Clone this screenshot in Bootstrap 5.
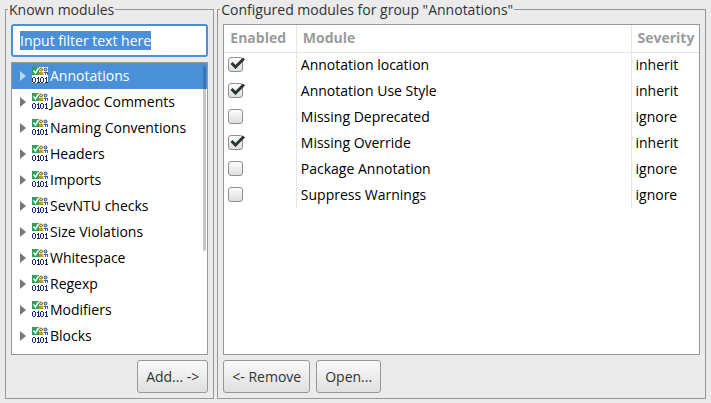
<!DOCTYPE html>
<html lang="en">
<head>
<meta charset="utf-8">
<meta name="viewport" content="width=device-width, initial-scale=1">
<title>Checkstyle configuration</title>
<link rel="stylesheet" href="https://cdn.jsdelivr.net/npm/bootstrap@5.3.0/dist/css/bootstrap.min.css">
<style>
body{background:#ebebeb;color:#000;font:14px/20px "Open Sans","Noto Sans",sans-serif}
.dialog-area{display:grid;grid-template-columns:minmax(0,209fr) minmax(0,488fr);padding:0 5px 4px;gap:3px}
.edge{width:1px;background:linear-gradient(#8c8c8c 45px,#6b2a86 45px 48px,#8c8c8c 48px 70px,#10102e 70px 76px,#8c8c8c 76px 89px,#222 89px 98px,#8c8c8c 98px 111px,#1d4f86 111px 122px,#8c8c8c 122px 133px,#151530 133px 139px,#8c8c8c 139px 152px,#6a20a0 152px 158px,#8c8c8c 158px 176px,#3a9cc0 176px 179px,#8c8c8c 179px 195px,#333 195px 203px,#8c8c8c 203px 216px,#226a80 216px 223px,#8c8c8c 223px 237px,#bf6a26 237px 245px,#8c8c8c 245px)}
.pane{border:1px solid #979797;padding:5px;gap:5px}
.pane legend{font-size:14px;line-height:19px;padding:0 1px;margin:0 0 0 -3px;color:#2e3436}
.filter{height:33px;border:2px solid #4a90d9;border-radius:3px;padding:0 7px;font-size:14px;color:#2e3436;background:#fff}
.filter:focus{box-shadow:none;border-color:#4a90d9;background:#fff}
.filter::selection{background:#4a90d9;color:#fff}
.sunken{border:1px solid #979797;background:#fff;min-height:0}
.tree-row{height:26px;padding-left:8px;color:#000}
.tree-row.current{background:#4a90d9;color:#fff}
.twist{width:6px;height:10px;fill:#777;margin-right:6px}
.current .twist{fill:#b9d7f5}
.mod-icon{width:16px;height:16px;margin:0 2px 2px 0}
.thumb{right:1px;top:2px;width:3px;height:186px;border-radius:2px;background:#c6c6c6}
.current-part{height:24px;background:#3a76b5;border-radius:2px 2px 0 0}
.mods{table-layout:fixed}
.mods th{height:27px;padding:0 0 0 6px;color:#999c9c;border-bottom:1px solid #e6e6e6}
.mods td{height:26px;padding:0 0 0 4px}
.mods th+th,.mods td+td{border-left:1px solid #e6e6e6}
.c-on{width:72px}
.c-sev{width:68px}
.tick{appearance:none;display:block;width:15px;height:15px;margin:0;border:1px solid #8f8f8f;border-radius:3px;background:linear-gradient(#fdfdfd,#dedede)}
.tick-wrap{width:17px;height:16px}
.tick-mark{left:2px;top:0;width:15px;height:12px;fill:none;stroke:#2e3436;stroke-width:3;pointer-events:none;display:none}
.tick:checked+.tick-mark{display:block}
.act{height:33px;border:1px solid #979797;border-radius:3px;background:linear-gradient(#fafafa,#dfdfdf);color:#2e3436;font-size:14px;line-height:20px;padding:0 8px}
.act-row{gap:6px}
</style>
<script src="https://cdn.jsdelivr.net/npm/bootstrap@5.3.0/dist/js/bootstrap.bundle.min.js"></script>
</head>
<body>
<svg class="d-none" aria-hidden="true">
<symbol id="mod" viewBox="0 0 16 16">
<path fill="#fff" d="M0 0h16v16H0z"/>
<path fill="#2fa05c" d="M0 0h7v8H0z"/><path fill="none" stroke="#fff" stroke-width="1.5" d="M1.500 3.500l2 2.500L6.500 1"/>
<circle cx="9" cy="2.500" r="1.500" fill="#e8d25a" stroke="#7a6a22"/><path fill="#b59c2a" d="M7 5h3l2 3H7z"/>
<circle cx="13.500" cy="2.500" r="1.500" fill="#a9c4ea" stroke="#294a86"/><path fill="#3c63a5" d="M11 5h5v3h-1V6h-1v2h-1V6h-2z"/><path fill="#d9b93a" d="M10 5h2v1h-2z"/>
<g fill="#1d2a66" shape-rendering="crispEdges">
<path id="z" d="M1 10h2v1H1zM0 11h1v4H0zM3 11h1v4H3zM1 15h2v1H1z"/><path id="n" d="M6 10h1v5h1v1H5v-1h1v-3H5v-1h1z"/>
<use href="#z" x="8"/><use href="#n" x="8"/></g>
</symbol>
<symbol id="tw" viewBox="0 0 6 10"><path d="M0 0l6 5-6 5z"/></symbol>
<symbol id="ck" viewBox="0 0 15 12"><path d="M1.500 6l4 4L14 1.500"/></symbol>
</svg>
<div class="d-flex vh-100 overflow-hidden">
<main class="dialog-area flex-grow-1">
<fieldset class="pane d-flex flex-column">
<legend class="float-none w-auto">Known modules</legend>
<input class="form-control filter flex-shrink-0" id="filter" type="text" aria-label="Filter" value="Input filter text here" autofocus>
<div class="sunken position-relative flex-grow-1 overflow-hidden">
<ul class="list-unstyled m-0" id="tree"></ul>
<div class="thumb position-absolute"><div class="current-part"></div></div>
</div>
<div class="d-flex justify-content-end"><button type="button" class="btn act">Add... -&gt;</button></div>
</fieldset>
<fieldset class="pane d-flex flex-column">
<legend class="float-none w-auto">Configured modules for group "Annotations"</legend>
<div class="sunken flex-grow-1 overflow-hidden">
<table class="mods w-100">
<colgroup><col class="c-on"><col><col class="c-sev"></colgroup>
<thead><tr><th>Enabled</th><th>Module</th><th>Severity</th></tr></thead>
<tbody id="rows"></tbody>
</table>
</div>
<div class="act-row d-flex"><button type="button" class="btn act">&lt;- Remove</button><button type="button" class="btn act">Open...</button></div>
</fieldset>
</main>
<div class="edge"></div>
</div>
<script>
const groups=["Annotations","Javadoc Comments","Naming Conventions","Headers","Imports","SevNTU checks","Size Violations","Whitespace","Regexp","Modifiers","Blocks"];
document.getElementById("tree").innerHTML=groups.map((g,i)=>`<li class="tree-row d-flex align-items-center${i?"":" current"}"><svg class="twist"><use href="#tw"/></svg><svg class="mod-icon"><use href="#mod"/></svg><span>${g}</span></li>`).join("");
const modules=[["Annotation location",1],["Annotation Use Style",1],["Missing Deprecated",0],["Missing Override",1],["Package Annotation",0],["Suppress Warnings",0]];
document.getElementById("rows").innerHTML=modules.map(([m,on],i)=>`<tr><td><div class="tick-wrap position-relative"><input class="tick" type="checkbox" aria-labelledby="m${i}"${on?" checked":""}><svg class="tick-mark position-absolute"><use href="#ck"/></svg></div></td><td id="m${i}">${m}</td><td>${on?"inherit":"ignore"}</td></tr>`).join("");
const filter=document.getElementById("filter");
filter.focus();
filter.select();
</script>
</body>
</html>
